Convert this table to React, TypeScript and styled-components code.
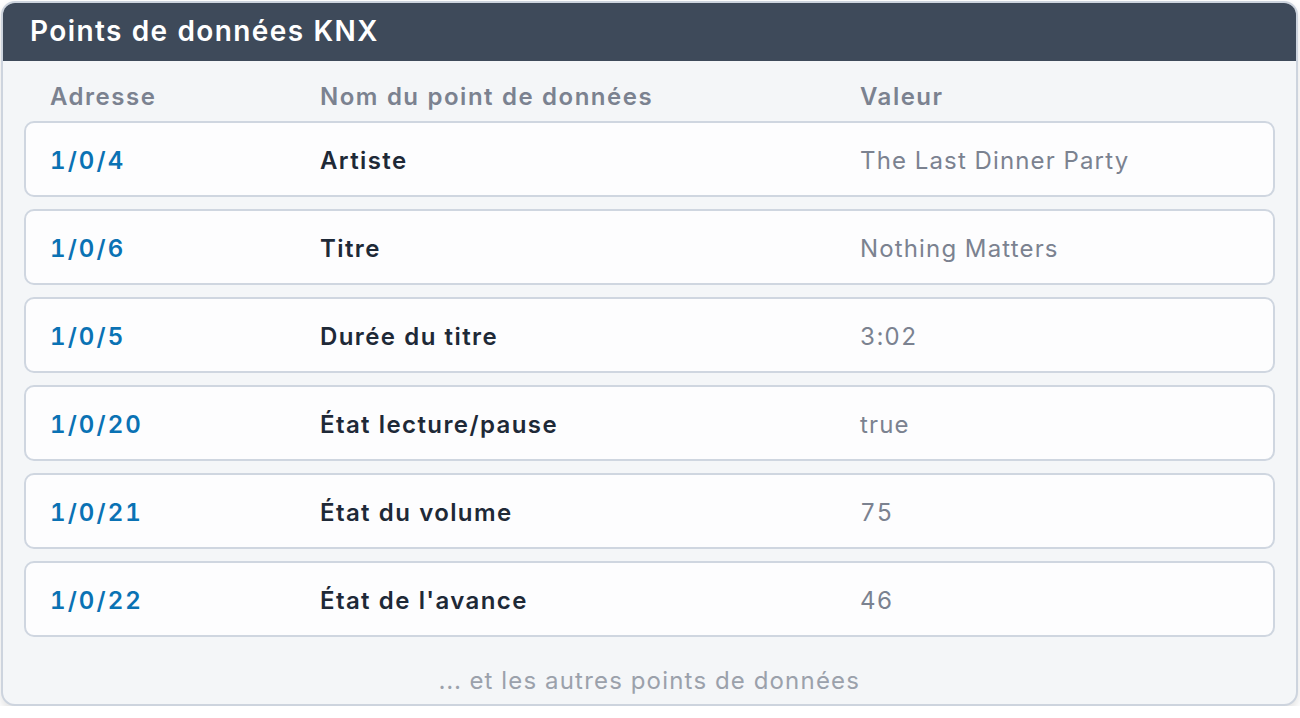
import React from "react";
import styled, { createGlobalStyle } from "styled-components";

const GlobalStyle = createGlobalStyle`
  html, body { margin: 0; padding: 0; background: #ffffff; }
  body {
    font-family: Inter, "Noto Sans", sans-serif;
    font-variant-numeric: tabular-nums;
    -webkit-font-smoothing: antialiased;
  }
  * { box-sizing: border-box; }
`;

const Card = styled.section`
  margin: 1px 0 0 1px;
  width: 1297px;
  height: 705px;
  border: 2px solid #cdd4de;
  border-radius: 14px;
  background: #f4f6f8;
  box-shadow: 0 5px 10px rgba(0, 0, 0, 0.12);
  overflow: hidden;
  display: flex;
  flex-direction: column;
`;

const Header = styled.header`
  height: 58px;
  background: #3e4a5a;
  display: flex;
  align-items: center;
  padding-left: 27px;
  padding-bottom: 2px;
`;

const Title = styled.h1`
  margin: 0;
  color: #ffffff;
  font-size: 28px;
  font-weight: 600;
  line-height: 1;
  letter-spacing: 1.4px;
`;

const Body = styled.div`
  padding: 0 21px;
  display: flex;
  flex-direction: column;
`;

const Columns = styled.div`
  display: grid;
  grid-template-columns: 270px 540px 1fr;
  padding: 21px 26px 9px;
  line-height: 30px;
  font-size: 24px;
  font-weight: 600;
  letter-spacing: 1.5px;
  color: #7b8290;
`;

const List = styled.div`
  display: flex;
  flex-direction: column;
  gap: 12px;
`;

const Row = styled.div`
  display: grid;
  grid-template-columns: 270px 540px 1fr;
  align-items: center;
  height: 76px;
  padding: 3px 24px 0;
  background: #fdfdfe;
  border: 2px solid #cfd6e0;
  border-radius: 10px;
  font-size: 24px;
  line-height: 30px;
`;

const Address = styled.span`
  color: #0a72b4;
  font-weight: 600;
  letter-spacing: 2.1px;
`;

const Name = styled.span`
  color: #1e2937;
  font-weight: 600;
  letter-spacing: 1.4px;
`;

const Value = styled.span`
  color: #7b8290;
  font-weight: 400;
  letter-spacing: 1.15px;
`;

const Footer = styled.div`
  padding-top: 29px;
  text-align: center;
  font-size: 24px;
  line-height: 30px;
  letter-spacing: 1.2px;
  color: #9ba1ab;
`;

const points = [
  { addr: "1/0/4", name: "Artiste", value: "The Last Dinner Party" },
  { addr: "1/0/6", name: "Titre", value: "Nothing Matters" },
  { addr: "1/0/5", name: "Durée du titre", value: "3:02" },
  { addr: "1/0/20", name: "État lecture/pause", value: "true" },
  { addr: "1/0/21", name: "État du volume", value: "75" },
  { addr: "1/0/22", name: "État de l'avance", value: "46" },
];

export default function App() {
  return (
    <>
      <GlobalStyle />
      <Card>
        <Header>
          <Title>Points de données KNX</Title>
        </Header>
        <Body>
          <Columns>
            <span>Adresse</span>
            <span>Nom du point de données</span>
            <span>Valeur</span>
          </Columns>
          <List>
            {points.map((p) => (
              <Row key={p.addr}>
                <Address>{p.addr}</Address>
                <Name>{p.name}</Name>
                <Value>{p.value}</Value>
              </Row>
            ))}
          </List>
          <Footer>... et les autres points de données</Footer>
        </Body>
      </Card>
    </>
  );
}
